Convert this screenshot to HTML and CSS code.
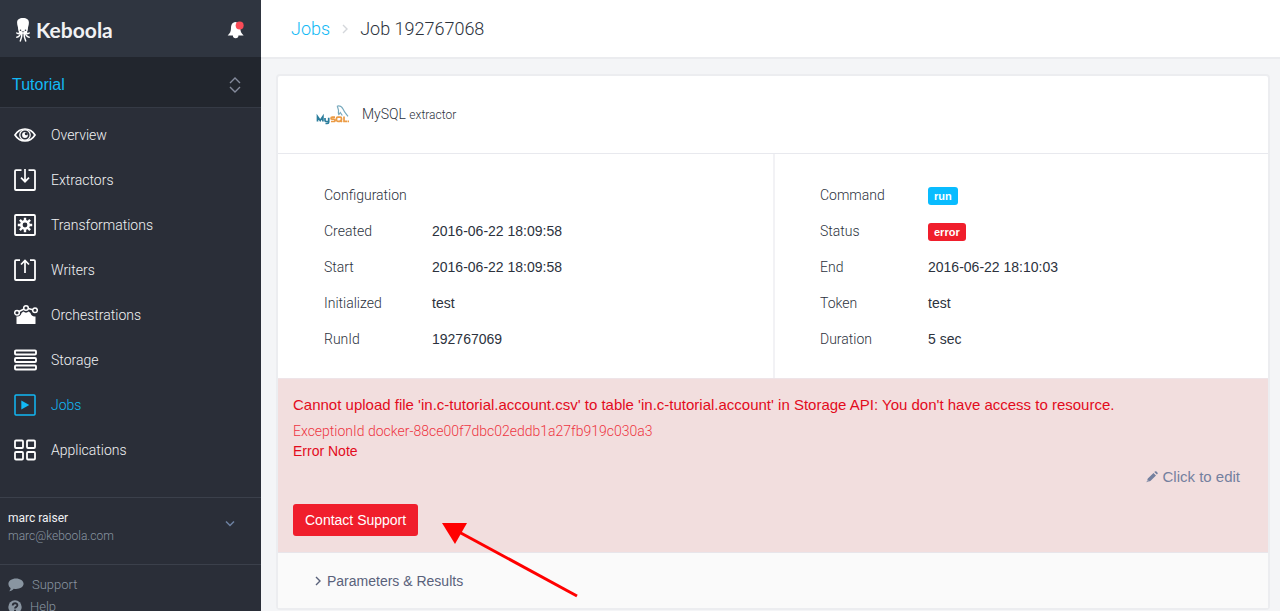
FILE: index.html
```html
<!DOCTYPE html>
<html lang="en">
<head>
<meta charset="utf-8">
<title>Job 192767068</title>
<link rel="stylesheet" href="styles.css">
</head>
<body>
<div class="app">
  <aside class="sidebar">
    <header class="brand">
      <a class="logo" href="#">
        <svg class="logo-mark" viewBox="0 0 14 26" width="14" height="26" aria-hidden="true">
          <path fill="#fff" d="M7 1C3.200 1 1.100 2.600 1.100 5.600c0 3 1 4 1 6.400 0 3 1.900 4.800 4.900 4.800s4.900-1.800 4.900-4.800c0-2.400 1-3.400 1-6.400C12.900 2.600 10.800 1 7 1z"/>
          <path fill="none" stroke="#fff" stroke-width="1.500" stroke-linecap="round" d="M4 14.500C3.500 17 2 17 .8 16M10 14.500c.5 2.500 2 2.500 3.200 1.500M4.800 15C4.500 18.500 3 19.800 .8 20.200M9.200 15c.3 3.500 1.800 4.800 4 5.200M6 15.500C6 19 5.500 21.500 4.300 24M8 15.500c0 3.500.5 6 1.700 8.500"/>
          <circle cx="4.500" cy="13.300" r=".8" fill="#2f3540"/><circle cx="9.500" cy="13.300" r=".8" fill="#2f3540"/><path d="M5.800 14.500q1.200.8 2.400 0" fill="none" stroke="#2f3540" stroke-width=".7"/>
        </svg>
        <span>Keboola</span>
      </a>
      <button class="bell" type="button" aria-label="Notifications">
        <svg viewBox="0 0 16 18" width="18" height="20" aria-hidden="true">
          <path fill="#fff" d="M7.500 1.800C4.500 2.300 3.500 4.500 3.500 7.300c0 3-.8 4.700-3 6.700h14.400c-2.200-2-3-3.700-3-6.700C11.900 4.500 10.500 2.300 7.500 1.800zM5.200 14a2.500 2.500 0 0 0 5 0z"/>
          <circle cx="11.300" cy="5" r="3.600" fill="#fa4b57"/>
        </svg>
      </button>
    </header>
    <button class="project" type="button">
      <span>Tutorial</span>
      <svg viewBox="0 0 12 16" width="12" height="16" aria-hidden="true"><path fill="none" stroke="#858b9c" stroke-width="1.400" d="M1 6l5-5 5 5M1 10l5 5 5-5"/></svg>
    </button>
    <nav class="menu">
      <a class="item" href="#">
        <svg viewBox="0 0 22 22" width="22" height="22" aria-hidden="true"><g fill="none" stroke="#fff"><path stroke-width="1.700" d="M1 11c5-8 15-8 20 0-5 8-15 8-20 0z"/><circle cx="11" cy="11" r="5.200" stroke-width="1.300"/></g><circle cx="11" cy="11" r="2.900" fill="#fff"/><circle cx="12.300" cy="9.700" r="1.500" fill="#2a2e38"/></svg>
        <span>Overview</span>
      </a>
      <a class="item" href="#">
        <svg viewBox="0 0 22 22" width="22" height="22" fill="none" stroke="#fff" aria-hidden="true"><path stroke-width="1.800" d="M7.500 1.200H2q-1 0-1 1V20q0 1 1 1h18q1 0 1-1V2.200q0-1-1-1h-5.500"/><path stroke-width="1.700" d="M11 0v12.500M7 8.700l4 4 4-4"/></svg>
        <span>Extractors</span>
      </a>
      <a class="item" href="#">
        <svg viewBox="0 0 22 22" width="22" height="22" fill="none" stroke="#fff" aria-hidden="true"><rect x="1" y="1" width="20" height="20" rx="1" stroke-width="1.800"/><circle cx="11" cy="11" r="3.700" stroke-width="2.600"/><path stroke-width="2.400" d="M11 3.800v3M11 15.200v3M3.800 11h3M15.200 11h3M5.900 5.900L8 8M14 14l2.100 2.100M5.900 16.100L8 14M14 8l2.100-2.100"/></svg>
        <span>Transformations</span>
      </a>
      <a class="item" href="#">
        <svg viewBox="0 0 22 22" width="22" height="22" fill="none" stroke="#fff" aria-hidden="true"><path stroke-width="1.800" d="M6 1.200H2q-1 0-1 1V20q0 1 1 1h18q1 0 1-1V2.200q0-1-1-1h-4"/><path stroke-width="1.700" d="M11 14V1.500M7 5.500l4-4 4 4"/></svg>
        <span>Writers</span>
      </a>
      <a class="item" href="#">
        <svg class="wide" viewBox="0 0 24 22" width="24" height="22" aria-hidden="true"><path fill="#fff" d="M2.500 19.500v-7c2.500.5 4.500-1 5-3.500l1.800-1.500c1.700 1.500 3.700 1.500 5.400 0L16.500 9c.5 2.500 2.500 3.800 5 3.500v7q0 .5-.5.500H3q-.5 0-.5-.5z"/><g fill="none" stroke="#fff" stroke-width="1.500"><circle cx="3" cy="8.700" r="2.300"/><circle cx="12" cy="4" r="2.300"/><circle cx="21" cy="6.200" r="2.300"/><path d="M5 7.500l5-2.500M14.200 4.600l4.600 1.100"/></g></svg>
        <span>Orchestrations</span>
      </a>
      <a class="item" href="#">
        <svg viewBox="0 0 23 22" width="23" height="22" fill="none" stroke="#fff" stroke-width="1.900" aria-hidden="true"><rect x="1" y="1.500" width="21" height="4" rx="1"/><rect x="1" y="9" width="21" height="4" rx="1"/><rect x="1" y="16.500" width="21" height="4" rx="1"/></svg>
        <span>Storage</span>
      </a>
      <a class="item active" href="#">
        <svg viewBox="0 0 22 22" width="22" height="22" aria-hidden="true"><rect x="1" y="1" width="20" height="20" rx="1" fill="none" stroke="#12b9f5" stroke-width="1.500"/><path fill="#12b9f5" d="M7.300 6.500v9l8-4.500z"/></svg>
        <span>Jobs</span>
      </a>
      <a class="item" href="#">
        <svg viewBox="0 0 22 22" width="22" height="22" fill="none" stroke="#fff" stroke-width="1.800" aria-hidden="true"><rect x="1" y="1.500" width="8" height="7.500" rx="1"/><rect x="13" y="1.500" width="8" height="7.500" rx="1"/><rect x="1" y="13" width="8" height="7.500" rx="1"/><rect x="13" y="13" width="8" height="7.500" rx="1"/></svg>
        <span>Applications</span>
      </a>
    </nav>
    <button class="user" type="button">
      <span class="who"><span class="name">marc raiser</span><span class="mail">marc@keboola.com</span></span>
      <svg viewBox="0 0 10 6" width="10" height="6" aria-hidden="true"><path fill="none" stroke="#6d80a0" stroke-width="1.500" d="M1 .5l4 4 4-4"/></svg>
    </button>
    <div class="links">
      <a href="#"><svg viewBox="0 0 16 14" width="16" height="14" aria-hidden="true"><path fill="#8995a1" d="M8 .5c4.200 0 7.600 2.300 7.600 5.300S12.200 11 8 11c-.8 0-1.500 0-2.200-.2C4.500 12.300 3 13 1.200 13.300c.9-1 1.400-2 1.400-3.200C1.200 9.200.4 7.600.4 5.800.4 2.800 3.800.5 8 .5z"/></svg><span>Support</span></a>
      <a href="#"><svg viewBox="0 0 14 14" width="14" height="14" aria-hidden="true"><circle cx="7" cy="7" r="6.700" fill="#8995a1"/><path fill="none" stroke="#2a2e38" stroke-width="1.900" d="M4.700 5.500C4.900 2.500 9.500 2.700 9.400 5.300 9.300 6.900 7 6.900 7 8.600M7 9.700v1.900"/></svg><span>Help</span></a>
    </div>
  </aside>

  <main class="main">
    <header class="crumbs">
      <a href="#">Jobs</a>
      <svg viewBox="0 0 6 10" width="6" height="10" aria-hidden="true"><path fill="none" stroke="#d4d7db" stroke-width="1.400" d="M1 1l4 4-4 4"/></svg>
      <h1>Job 192767068</h1>
    </header>
    <section class="card">
      <div class="component">
        <svg viewBox="0 0 34 20" width="34" height="20" aria-hidden="true">
          <g fill="none" stroke-width="1.700"><path stroke="#2b7d9c" d="M1.500 16.500v-5l2.700 4 2.700-4v5M9 13v2.500q0 1 1.500 1h1.700M12.700 12.800V17q0 1.500-1.500 1.500H9.500"/><path stroke="#eb9b45" d="M19 12.200h-2.700q-1.300 0-1.300 1t1.300 1h1.400q1.300 0 1.300 1.200t-1.300 1.100H15M21.800 12.200h2.400q1.300 0 1.300 1.300v1.600q0 1.200-1.300 1.200h-2.400q-1.300 0-1.300-1.200v-1.600q0-1.300 1.300-1.300zM24 15l2 2M28 11.500v4.800h3.500M32 16.300h1"/></g>
          <path fill="none" stroke="#77a9bd" stroke-width="1.200" d="M21 1.200c2.500-1 5 .5 6 2.700.8 1.700 1.400 3 2.500 4.200l2.500 3.200M21 1.200c1 1.200 1 2.500 1.500 4 .2 1.700-.7 3 .4 4.300L24.300 7.500l2 3"/>
        </svg>
        <p>MySQL <small>extractor</small></p>
      </div>
      <div class="details">
        <dl>
          <div><dt>Configuration</dt><dd></dd></div>
          <div><dt>Created</dt><dd>2016-06-22 18:09:58</dd></div>
          <div><dt>Start</dt><dd>2016-06-22 18:09:58</dd></div>
          <div><dt>Initialized</dt><dd>test</dd></div>
          <div><dt>RunId</dt><dd>192767069</dd></div>
        </dl>
        <dl>
          <div><dt>Command</dt><dd><span class="label info">run</span></dd></div>
          <div><dt>Status</dt><dd><span class="label danger">error</span></dd></div>
          <div><dt>End</dt><dd>2016-06-22 18:10:03</dd></div>
          <div><dt>Token</dt><dd>test</dd></div>
          <div><dt>Duration</dt><dd>5 sec</dd></div>
        </dl>
      </div>
      <div class="alert">
        <p class="message">Cannot upload file 'in.c-tutorial.account.csv' to table 'in.c-tutorial.account' in Storage API: You don't have access to resource.</p>
        <p class="exception">ExceptionId docker-88ce00f7dbc02eddb1a27fb919c030a3</p>
        <p class="note">Error Note</p>
        <button class="edit" type="button">
          <svg viewBox="0 0 12 12" width="12" height="12" aria-hidden="true"><path fill="#74809f" d="M1.800 7.500l5.700-5.600 2.500 2.500-5.600 5.700L.5 11.300zM8.300 1.100l.6-.6q.8-.7 1.600 0l.9.900q.7.800 0 1.600l-.6.600z"/><path fill="#f2dede" d="M1.600 9l1.200 1.200-1.100.3-.4-.4z"/></svg>
          <span>Click to edit</span>
        </button>
        <button class="support" type="button">Contact Support</button>
        <svg class="pointer" viewBox="0 0 138 76" width="138" height="76" aria-hidden="true"><path stroke="#f00" stroke-width="3" d="M18 10l118 64"/><path fill="#f00" d="M1 1h25L14 22z"/></svg>
      </div>
      <button class="params" type="button">
        <svg viewBox="0 0 6 10" width="6" height="10" aria-hidden="true"><path fill="none" stroke="#59617a" stroke-width="1.400" d="M1 1l4 4-4 4"/></svg>
        <span>Parameters &amp; Results</span>
      </button>
    </section>
  </main>
</div>
</body>
</html>
```
FILE: styles.css
```css
* { box-sizing: border-box; }

body {
  margin: 0;
  height: 100vh;
  overflow: hidden;
  background: #f4f5f7;
  color: #2c323d;
  font: 14px/20px "Liberation Sans", Arial, sans-serif;
}

h1, p, dl, dd { margin: 0; }
a { color: inherit; text-decoration: none; }
button {
  padding: 0;
  border: 0;
  background: none;
  color: inherit;
  font: inherit;
  text-align: left;
  cursor: pointer;
}
svg { display: block; flex: none; }

.app { display: flex; height: 100%; }

.sidebar {
  display: flex;
  flex: none;
  flex-direction: column;
  width: 261px;
  overflow: hidden;
  background: #2a2e38;
  color: #f1f2f4;
  font-family: Roboto, sans-serif;
  font-weight: 300;
}
.brand {
  display: flex;
  flex: none;
  align-items: center;
  justify-content: space-between;
  height: 59px;
  padding: 3px 16px 0 16px;
  background: #2f3540;
  border-bottom: 2px solid #22262e;
}
.logo {
  display: flex;
  align-items: center;
  gap: 6px;
  font: 700 21px/24px Lato, sans-serif;
}
.project {
  display: flex;
  flex: none;
  align-items: center;
  justify-content: space-between;
  height: 49px;
  padding: 4px 20px 0 12px;
  background: #22262e;
  border-bottom: 1px solid #353a45;
  color: #12b9f5;
  font: 16px/20px "Liberation Sans", Arial, sans-serif;
}
.menu {
  display: grid;
  flex: none;
  grid-auto-rows: 45px;
  padding: 4px 0 25px;
}
.item {
  display: grid;
  grid-template-columns: 37px 1fr;
  align-items: center;
  padding-left: 14px;
  font-size: 14px;
}
.active { color: #12b9f5; }
.user {
  display: flex;
  flex: none;
  align-items: center;
  justify-content: space-between;
  height: 68px;
  padding: 0 26px 8px 8px;
  border-top: 1px solid #3b404b;
  border-bottom: 1px solid #3b404b;
  font-size: 12px;
  line-height: 18px;
}
.user svg { margin-bottom: 6px; }
.who { display: grid; }
.name { font-weight: 400; }
.mail { color: #8995a1; }
.links {
  display: grid;
  flex: none;
  gap: 2px;
  padding: 10px 8px;
  color: #8995a1;
  font-size: 13px;
}
.links a { display: flex; align-items: center; gap: 8px; }

.main { flex: 1; min-width: 0; }
.crumbs {
  display: flex;
  align-items: center;
  gap: 12px;
  height: 59px;
  padding: 0 30px;
  background: #fff;
  border-bottom: 2px solid #ebecef;
  font: 300 18px/24px Roboto, sans-serif;
}
.crumbs a { color: #12b9f5; }
.crumbs h1 { font: inherit; }

.card {
  margin: 15px 10px 0 15px;
  background: #fff;
  border: 2px solid #ecedf0;
  border-radius: 4px;
}
.component {
  display: flex;
  align-items: center;
  gap: 12px;
  height: 78px;
  padding-left: 38px;
  border-bottom: 1px solid #e8e9ee;
  font: 300 14px/20px Roboto, sans-serif;
}
.component small { font-size: 12px; }
.details {
  display: grid;
  grid-template-columns: 1fr 1fr;
}
.details dl {
  display: grid;
  grid-auto-rows: 36px;
  padding: 23px 46px 21px;
}
.details dl + dl { padding-left: 45px; border-left: 2px solid #f2f2f5; }
.details dl > div {
  display: grid;
  grid-template-columns: 108px 1fr;
  align-items: center;
}
.details dt { font-family: Roboto, sans-serif; font-weight: 300; }
.label {
  display: inline-block;
  padding: 0 6px;
  border-radius: 3px;
  color: #fff;
  font-size: 11px;
  font-weight: 700;
  line-height: 18px;
}
.info { background: #09bcff; }
.danger { background: #f01e2c; }

.alert {
  display: grid;
  position: relative;
  padding: 16px 28px 16px 15px;
  background: #f2dede;
  border-top: 1px solid #eee4e8;
  border-bottom: 1px solid #e8e5ea;
  color: #e30b1c;
}
.message { font-size: 15px; }
.exception {
  margin-top: 6px;
  color: #ee3542;
  font-family: Roboto, sans-serif;
  font-weight: 300;
}
.edit {
  display: flex;
  align-items: center;
  justify-self: end;
  gap: 4px;
  margin-top: 6px;
  color: #74809f;
  font-size: 15px;
}
.support {
  justify-self: start;
  margin-top: 17px;
  padding: 6px 12px;
  border-radius: 3px;
  background: #f01e2c;
  color: #fff;
}
.pointer {
  position: absolute;
  left: 163px;
  top: 143px;
  z-index: 1;
}
.params {
  display: flex;
  align-items: center;
  gap: 6px;
  width: 100%;
  height: 55px;
  padding-left: 37px;
  background: #fafafa;
  color: #59617a;
}
```
